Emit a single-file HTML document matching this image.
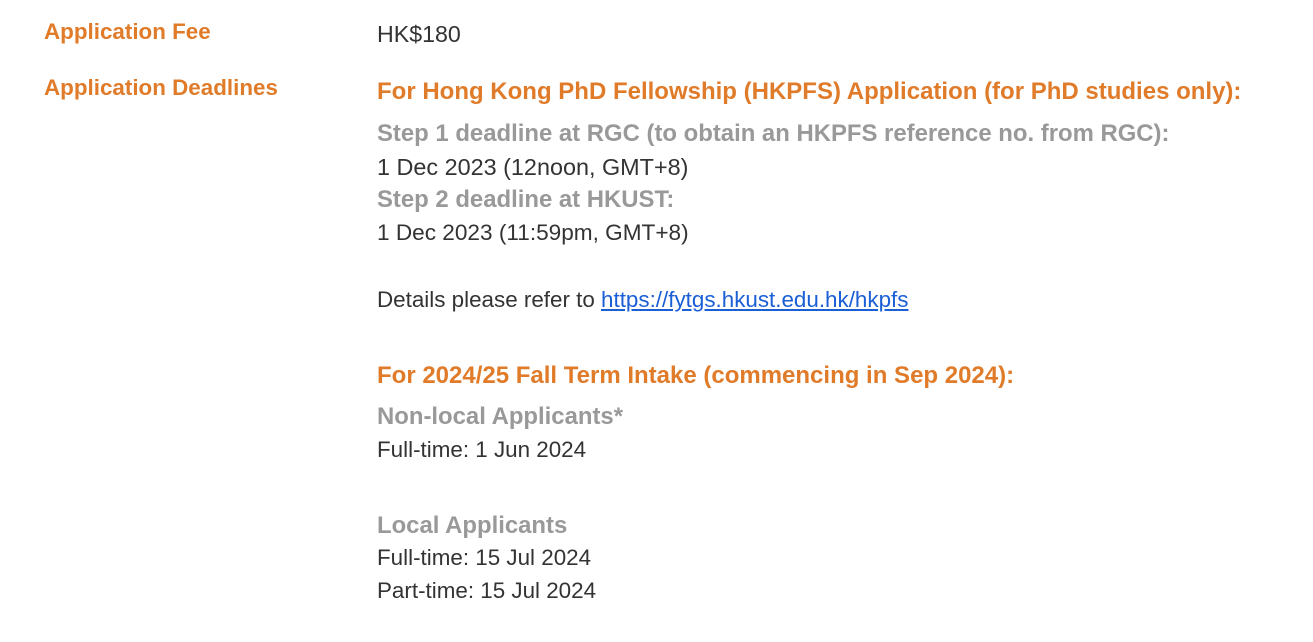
<!DOCTYPE html>
<html><head><meta charset="utf-8"><style>
body{margin:0;width:1313px;height:642px;background:#fff;position:relative;font-family:"Liberation Sans",Arial,sans-serif;overflow:hidden}
div{position:absolute;white-space:nowrap;line-height:32px}
.l{left:44px;color:#e07b2a;font-weight:bold;font-size:22.4px}
.r{left:377px}
.h{color:#e07b2a;font-weight:bold;font-size:24px}
.s{color:#999;font-weight:bold;font-size:23.9px}
.b{color:#333;font-size:23.4px}
.c{font-size:22.4px}
a{color:#1a5fd6}
</style></head><body>
<div class="l" style="top:16px">Application Fee</div>
<div class="l" style="top:72px">Application Deadlines</div>
<div class="r b" style="top:18px;font-size:23.2px">HK$180</div>
<div class="r h" style="top:76px">For Hong Kong PhD Fellowship (HKPFS) Application (for PhD studies only):</div>
<div class="r s" style="top:118px">Step 1 deadline at RGC (to obtain an HKPFS reference no. from RGC):</div>
<div class="r b" style="top:151px">1 Dec 2023 (12noon, GMT+8)</div>
<div class="r s" style="top:184px">Step 2 deadline at HKUST:</div>
<div class="r b" style="top:217px;font-size:22.6px">1 Dec 2023 (11:59pm, GMT+8)</div>
<div class="r b c" style="top:284px">Details please refer to <a href="#">https://fytgs.hkust.edu.hk/hkpfs</a></div>
<div class="r h" style="top:360px">For 2024/25 Fall Term Intake (commencing in Sep 2024):</div>
<div class="r s" style="top:401px">Non-local Applicants*</div>
<div class="r b c" style="top:434px">Full-time: 1 Jun 2024</div>
<div class="r s" style="top:510px">Local Applicants</div>
<div class="r b c" style="top:542px">Full-time: 15 Jul 2024</div>
<div class="r b c" style="top:575px">Part-time: 15 Jul 2024</div>
</body></html>
